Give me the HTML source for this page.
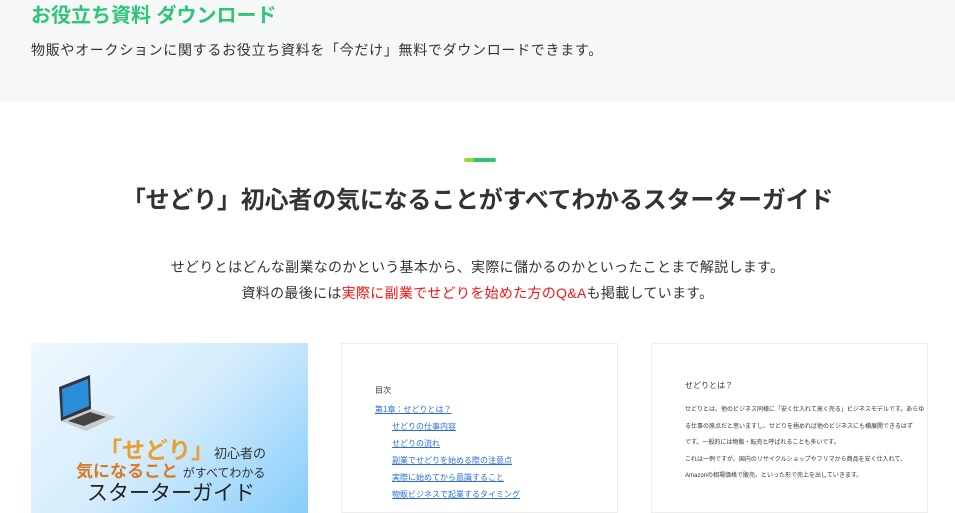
<!DOCTYPE html><html><head><meta charset="utf-8"><style>
body{margin:0;width:955px;height:499px;overflow:hidden;background:#fff;font-family:"Liberation Sans","Noto Sans CJK JP",sans-serif;color:#333;position:relative}
.hd{position:absolute;left:0;top:0;width:955px;height:101px;background:#f6f7f7}
.t{position:absolute;left:31px;top:1px;font-size:20px;font-weight:bold;color:#2ec47a;line-height:30px}
.s{position:absolute;left:31px;top:40px;font-size:14px;line-height:20px;color:#333;letter-spacing:0.7px}
.bar{position:absolute;left:464px;top:158px;width:32px;height:4px;border-radius:2px;background:linear-gradient(90deg,#9bd63c 0 10px,#2ec47a 10px)}
h1{position:absolute;left:0;width:955px;top:185px;margin:0;text-align:center;font-size:24px;line-height:32px;font-weight:bold;color:#333;letter-spacing:-0.2px}
.p{position:absolute;left:0;width:955px;text-align:center;font-size:14px;letter-spacing:0.3px;line-height:26px;color:#333}
.r{color:#f11}
.c{position:absolute;top:343px;width:277px;height:170px;border:1px solid #eee;background:#fff;box-sizing:border-box}
.c1{left:31px;background:linear-gradient(135deg,#eef8ff 0%,#d4ecfc 50%,#86cdfb 100%);border:none}
.toc{position:absolute;font-size:8px;color:#2a6fd6;text-decoration:underline}
.sm{position:absolute;font-size:6px;color:#333;white-space:nowrap}
</style></head><body>
<div class="hd"><div class="t">お役立ち資料 ダウンロード</div><div class="s">物販やオークションに関するお役立ち資料を「今だけ」無料でダウンロードできます。</div></div>
<div class="bar"></div>
<h1>「せどり」初心者の気になることがすべてわかるスターターガイド</h1>
<div class="p" style="top:254px">せどりとはどんな副業なのかという基本から、実際に儲かるのかといったことまで解説します。</div>
<div class="p" style="top:280px">資料の最後には<span class="r">実際に副業でせどりを始めた方のQ&amp;A</span>も掲載しています。</div>
<div class="c c1">
<svg style="position:absolute;left:25px;top:28px" width="62" height="62" viewBox="0 0 62 62"><polygon points="3,16 34,4 35,38 5,50" fill="#334"/><polygon points="6,18 32,8 33,35 7,46" fill="#2a8fd8"/><polygon points="5,50 35,38 60,46 30,60" fill="#ccc"/><polygon points="12,50 34,41 50,46 28,55" fill="#444"/></svg>
<div style="position:absolute;left:68px;top:88px;font-size:23px;font-weight:bold;color:#e8a030;white-space:nowrap">「せどり」<span style="font-size:13px;color:#333;font-weight:normal">初心者の</span></div>
<div style="position:absolute;left:45px;top:114px;font-size:17px;font-weight:bold;color:#d87a2a;white-space:nowrap">気になること <span style="font-size:12px;color:#333;font-weight:normal">がすべてわかる</span></div>
<div style="position:absolute;left:56px;top:134px;font-size:21px;color:#222;white-space:nowrap">スターターガイド</div>
</div>
<div class="c" style="left:341px">
<div style="position:absolute;left:33px;top:41px;font-size:8px;color:#333">目次</div>
<div class="toc" style="left:33px;top:60px">第1章：せどりとは？</div>
<div class="toc" style="left:50px;top:77px">せどりの仕事内容</div>
<div class="toc" style="left:50px;top:94px">せどりの流れ</div>
<div class="toc" style="left:50px;top:111px">副業でせどりを始める際の注意点</div>
<div class="toc" style="left:50px;top:128px">実際に始めてから意識すること</div>
<div class="toc" style="left:50px;top:145px">物販ビジネスで起業するタイミング</div>
</div>
<div class="c" style="left:651px">
<div style="position:absolute;left:33px;top:36px;font-size:8px">せどりとは？</div>
<div class="sm" style="left:33px;top:60px">せどりとは、他のビジネス同様に「安く仕入れて高く売る」ビジネスモデルです。あらゆ</div>
<div class="sm" style="left:33px;top:77px">る仕事の原点だと思いますし、せどりを極めれば他のビジネスにも横展開できるはず</div>
<div class="sm" style="left:33px;top:93px">です。一般的には物販・転売と呼ばれることも多いです。</div>
<div class="sm" style="left:33px;top:110px">これは一例ですが、国内のリサイクルショップやフリマから商品を安く仕入れて、</div>
<div class="sm" style="left:33px;top:126px">Amazonの相場価格で販売、といった形で売上を出していきます。</div>
</div>
</body></html>
